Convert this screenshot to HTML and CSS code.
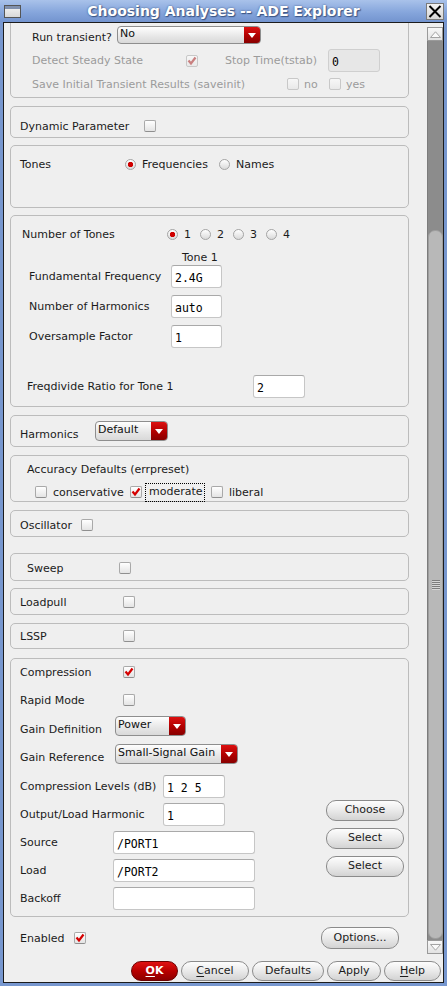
FILE: index.html
```html
<!DOCTYPE html>
<html>
<head>
<meta charset="utf-8">
<title>Choosing Analyses -- ADE Explorer</title>
<link rel="stylesheet" href="styles.css">
</head>
<body>
<div class="window">
  <div class="titlebar">
    <div class="tb-left"><span class="win-icon"><span class="win-icon-bar"></span></span></div>
    <div class="title">Choosing Analyses -- ADE Explorer</div>
    <div class="tb-right">
      <span class="close-btn"><svg width="14" height="13" viewBox="0 0 14 13"><path d="M1.5 1 L12.5 12 M12.5 1 L1.5 12" stroke="#000" stroke-width="2"/></svg></span>
    </div>
  </div>
  <div class="client">
    <div class="main">
      <div class="viewport">
        <div class="scroll-content">

          <section class="group g-transient">
            <div class="row h18 al-end">
              <span class="lbl w85">Run transient?</span>
              <div class="combo h18c w144"><span class="combo-text">No</span><span class="combo-arrow"><svg width="8" height="5" viewBox="0 0 8 5"><path d="M0 0H8L4 5Z" fill="#fff"/></svg></span></div>
            </div>
            <div class="row h23 mt5 dis">
              <span class="lbl w154">Detect Steady State</span>
              <span class="cb checked disabled"><svg width="10" height="10" viewBox="0 0 10 10"><path d="M1.5 4.5 L4 7.5 L8.5 1.5" fill="none" stroke="#c98080" stroke-width="2.2"/></svg></span>
              <span class="lbl ml27 w103">Stop Time(tstab)</span>
              <span class="field field-dis w52">0</span>
            </div>
            <div class="row h18 mt3 dis">
              <span class="lbl w255">Save Initial Transient Results (saveinit)</span>
              <span class="opt w42"><span class="cb disabled"></span><span>no</span></span>
              <span class="opt"><span class="cb disabled"></span><span>yes</span></span>
            </div>
          </section>

          <section class="group g-dyn">
            <div class="row h18">
              <span class="lbl w124">Dynamic Parameter</span>
              <span class="cb"></span>
            </div>
          </section>

          <section class="group g-tones">
            <div class="row h18">
              <span class="lbl w105">Tones</span>
              <span class="ropt w94"><span class="radio on"></span>Frequencies</span>
              <span class="ropt"><span class="radio"></span>Names</span>
            </div>
          </section>

          <section class="group g-hb">
            <div class="row h18 ml11">
              <span class="lbl w145">Number of Tones</span>
              <span class="ropt w33"><span class="radio on"></span>1</span>
              <span class="ropt w33"><span class="radio"></span>2</span>
              <span class="ropt w33"><span class="radio"></span>3</span>
              <span class="ropt"><span class="radio"></span>4</span>
            </div>
            <div class="tone-head">Tone 1</div>
            <div class="row h23 ml18">
              <span class="lbl w142">Fundamental Frequency</span>
              <span class="field w51">2.4G</span>
            </div>
            <div class="row h23 ml18 mt7">
              <span class="lbl w142">Number of Harmonics</span>
              <span class="field w51">auto</span>
            </div>
            <div class="row h23 ml18 mt7">
              <span class="lbl w142">Oversample Factor</span>
              <span class="field w51">1</span>
            </div>
            <div class="row h23 ml16 mt27">
              <span class="lbl w226">Freqdivide Ratio for Tone 1</span>
              <span class="field w52">2</span>
            </div>
          </section>

          <section class="group g-harm">
            <div class="row h20 al-end">
              <span class="lbl w75">Harmonics</span>
              <div class="combo h20c w73"><span class="combo-text">Default</span><span class="combo-arrow"><svg width="8" height="5" viewBox="0 0 8 5"><path d="M0 0H8L4 5Z" fill="#fff"/></svg></span></div>
            </div>
          </section>

          <section class="group g-acc">
            <div class="acc-title">Accuracy Defaults (errpreset)</div>
            <div class="row h18 ml24 mt6 al-start">
              <span class="opt6 w95"><span class="cb"></span>conservative</span>
              <span class="cb checked"><svg width="10" height="10" viewBox="0 0 10 10"><path d="M1.5 4.5 L4 7.5 L8.5 1.5" fill="none" stroke="#d40000" stroke-width="2.2"/></svg></span>
              <span class="focus-lbl">moderate</span>
              <span class="opt6"><span class="cb"></span>liberal</span>
            </div>
          </section>

          <section class="group g-osc">
            <div class="row h18">
              <span class="lbl w61">Oscillator</span>
              <span class="cb"></span>
            </div>
          </section>

          <section class="group g-sweep">
            <div class="row h18">
              <span class="lbl w92">Sweep</span>
              <span class="cb"></span>
            </div>
          </section>

          <section class="group g-lp">
            <div class="row h18">
              <span class="lbl w103">Loadpull</span>
              <span class="cb"></span>
            </div>
          </section>

          <section class="group g-lssp">
            <div class="row h18">
              <span class="lbl w103">LSSP</span>
              <span class="cb"></span>
            </div>
          </section>

          <section class="group g-comp">
            <div class="row h18">
              <span class="lbl w103">Compression</span>
              <span class="cb checked"><svg width="10" height="10" viewBox="0 0 10 10"><path d="M1.5 4.5 L4 7.5 L8.5 1.5" fill="none" stroke="#d40000" stroke-width="2.2"/></svg></span>
            </div>
            <div class="row h18 mt10">
              <span class="lbl w103">Rapid Mode</span>
              <span class="cb"></span>
            </div>
            <div class="row h20 mt7 al-end">
              <span class="lbl w95">Gain Definition</span>
              <div class="combo h20c w71"><span class="combo-text">Power</span><span class="combo-arrow"><svg width="8" height="5" viewBox="0 0 8 5"><path d="M0 0H8L4 5Z" fill="#fff"/></svg></span></div>
            </div>
            <div class="row h20 mt8 al-end">
              <span class="lbl w95">Gain Reference</span>
              <div class="combo h20c w123"><span class="combo-text">Small-Signal Gain</span><span class="combo-arrow"><svg width="8" height="5" viewBox="0 0 8 5"><path d="M0 0H8L4 5Z" fill="#fff"/></svg></span></div>
            </div>
            <div class="row h23 mt11">
              <span class="lbl w143">Compression Levels (dB)</span>
              <span class="field w62">1 2 5</span>
            </div>
            <div class="row h23 mt5">
              <span class="lbl w143">Output/Load Harmonic</span>
              <span class="field w62">1</span>
              <button class="btn side">Choose</button>
            </div>
            <div class="row h23 mt5">
              <span class="lbl w93">Source</span>
              <span class="field w142">/PORT1</span>
              <button class="btn side">Select</button>
            </div>
            <div class="row h23 mt5">
              <span class="lbl w93">Load</span>
              <span class="field w142">/PORT2</span>
              <button class="btn side">Select</button>
            </div>
            <div class="row h23 mt5">
              <span class="lbl w93">Backoff</span>
              <span class="field w142"></span>
            </div>
          </section>

          <div class="enabled-row">
            <span class="lbl w54">Enabled</span>
            <span class="cb checked"><svg width="10" height="10" viewBox="0 0 10 10"><path d="M1.5 4.5 L4 7.5 L8.5 1.5" fill="none" stroke="#d40000" stroke-width="2.2"/></svg></span>
            <button class="btn opts">Options...</button>
          </div>

        </div>
      </div>
      <div class="scrollbar">
        <div class="sb-btn"><svg width="11" height="7" viewBox="0 0 11 7"><path d="M0.5 6.5 L5.5 0.8 L10.5 6.5 Z" fill="#fafafa" stroke="#a4a4a4"/></svg></div>
        <div class="sb-track">
          <div class="sb-thumb"><span class="grip"></span></div>
        </div>
        <div class="sb-btn"><svg width="11" height="7" viewBox="0 0 11 7"><path d="M0.5 0.5 L5.5 6.2 L10.5 0.5 Z" fill="#fafafa" stroke="#a4a4a4"/></svg></div>
      </div>
    </div>
    <div class="dialog-buttons">
      <button class="btn dbtn ok w47"><u>O</u>K</button>
      <button class="btn dbtn w68"><u>C</u>ancel</button>
      <button class="btn dbtn w72">Defaults</button>
      <button class="btn dbtn w54b">Apply</button>
      <button class="btn dbtn w57"><u>H</u>elp</button>
    </div>
  </div>
</div>
</body>
</html>
```

FILE: styles.css
```css
* { box-sizing: border-box; }
html, body { margin: 0; padding: 0; }
body {
  width: 447px;
  height: 986px;
  overflow: hidden;
  font-family: "DejaVu Sans", "Liberation Sans", sans-serif;
  font-size: 11px;
  color: #1b1b1b;
  background: #7797cf;
}
.window {
  width: 447px;
  height: 986px;
  display: flex;
  flex-direction: column;
  background: #7797cf;
}

/* title bar */
.titlebar {
  height: 22px;
  display: grid;
  grid-template-columns: 1fr auto 1fr;
  align-items: center;
  background: linear-gradient(#a9c2ea, #86a6dc 55%, #7394cf);
}
.tb-left { padding-left: 4px; display: flex; align-items: center; }
.tb-right { justify-self: end; padding-right: 3px; display: flex; align-items: center; }
.title {
  color: #fff;
  font-weight: bold;
  font-size: 14px;
  line-height: 22px;
  text-shadow: 1px 1px 1px #3b5584, 0 0 2px #3b5584;
}
.win-icon {
  width: 17px;
  height: 13px;
  border: 1px solid #555;
  background: linear-gradient(#f4f4f4, #d8d8d8);
  display: flex;
  flex-direction: column;
}
.win-icon-bar { height: 3px; background: #8090ad; }
.close-btn {
  width: 18px;
  height: 17px;
  border: 1px solid #7a7a7a;
  background: linear-gradient(#f2f2f2, #d6d6d6);
  display: flex;
  align-items: center;
  justify-content: center;
}

/* client area */
.client {
  flex: 1;
  margin: 0 3px 3px;
  border: 1px solid #1c1c1c;
  background: #efefef;
  display: flex;
  flex-direction: column;
  min-height: 0;
}
.main { flex: 1; display: flex; min-height: 0; }
.viewport { flex: 1; overflow: hidden; }
.scroll-content { margin-top: -10px; padding: 0 18px 0 6px; }

/* scrollbar */
.scrollbar {
  width: 16px;
  display: flex;
  flex-direction: column;
  padding: 4px 0 1px;
}
.sb-btn {
  height: 14px;
  border: 1px solid #9a9a9a;
  background: linear-gradient(#f8f8f8, #e2e2e2);
  display: flex;
  align-items: center;
  justify-content: center;
}
.sb-track {
  flex: 1;
  background: #8c8c8c;
  display: flex;
  flex-direction: column;
  border-left: 1px solid #7c7c7c;
}
.sb-thumb {
  margin-top: 189px;
  height: 709px;
  background: #b8b8b8;
  border: 1px solid #9d9d9d;
  border-radius: 7px;
  display: flex;
  align-items: center;
  justify-content: center;
}
.grip {
  width: 8px;
  height: 10px;
  background: repeating-linear-gradient(#7e7e7e 0 1px, #d8d8d8 1px 2px);
}

/* groups */
.group { border: 1px solid #bcbcbc; border-radius: 5px; }
.g-transient { padding: 12px 0 4px 21px; }
.g-dyn { margin-top: 8px; padding: 10px 0 2px 9px; }
.g-tones { margin-top: 7px; padding: 9px 0 34px 9px; }
.g-hb { margin-top: 7px; padding: 9px 0 8px 0; }
.g-harm { margin-top: 8px; padding: 5px 0 5px 9px; }
.g-acc { margin-top: 8px; padding: 7px 0 0 0; }
.g-osc { margin-top: 8px; padding: 5px 0 2px 9px; }
.g-sweep { margin-top: 16px; padding: 5px 0 3px 16px; }
.g-lp { margin-top: 7px; padding: 4px 0 3px 9px; }
.g-lssp { margin-top: 8px; padding: 3px 0 3px 9px; }
.g-comp { margin-top: 9px; padding: 4px 4px 6px 9px; }

.row { display: flex; align-items: center; }
.al-end { align-items: flex-end; }
.al-start { align-items: flex-start; }
.h18 { height: 18px; }
.h20 { height: 20px; }
.h23 { height: 23px; }
.mt3 { margin-top: 3px; }
.mt5 { margin-top: 5px; }
.mt6 { margin-top: 6px; }
.mt7 { margin-top: 7px; }
.mt8 { margin-top: 8px; }
.mt10 { margin-top: 10px; }
.mt11 { margin-top: 11px; }
.mt27 { margin-top: 27px; }
.ml11 { margin-left: 11px; }
.ml16 { margin-left: 16px; }
.ml18 { margin-left: 18px; }
.ml24 { margin-left: 24px; }
.ml27 { margin-left: 27px; }

.lbl { flex: none; line-height: 13px; white-space: nowrap; }
.w33 { width: 33px; }
.w42 { width: 42px; }
.w51 { width: 51px; }
.w52 { width: 52px; }
.w54 { width: 54px; }
.w61 { width: 61px; }
.w62 { width: 62px; }
.w71 { width: 71px; }
.w73 { width: 73px; }
.w75 { width: 75px; }
.w85 { width: 85px; }
.w92 { width: 92px; }
.w93 { width: 93px; }
.w94 { width: 94px; }
.w95 { width: 95px; }
.w103 { width: 103px; }
.w105 { width: 105px; }
.w123 { width: 123px; }
.w124 { width: 124px; }
.w142 { width: 142px; }
.w143 { width: 143px; }
.w144 { width: 144px; }
.w145 { width: 145px; }
.w154 { width: 154px; }
.w226 { width: 226px; }
.w255 { width: 255px; }

.dis { color: #9b9b9b; }

.tone-head { margin: 8px 0 0 171px; height: 14px; line-height: 14px; }
.acc-title { margin-left: 16px; height: 14px; line-height: 14px; }

/* checkbox */
.cb {
  flex: none;
  width: 12px;
  height: 12px;
  border: 1px solid #a9a9a9;
  border-bottom-color: #8f8f8f;
  border-radius: 2px;
  background: linear-gradient(#ffffff, #e4e4e4);
  display: flex;
  align-items: center;
  justify-content: center;
}
.cb.disabled { border-color: #c8c8c8; background: linear-gradient(#f7f7f7, #e9e9e9); }
.opt { display: flex; align-items: center; gap: 5px; flex: none; }
.opt6 { display: flex; align-items: center; gap: 6px; flex: none; }
.focus-lbl {
  margin: 0 6px 0 3px;
  width: 60px;
  height: 19px;
  padding-left: 3px;
  border: 1px dotted #000;
  line-height: 16px;
  flex: none;
}
.row.al-start > .cb, .row.al-start > .opt6 { align-self: center; }

/* radio */
.ropt { display: flex; align-items: center; gap: 6px; flex: none; }
.radio {
  flex: none;
  width: 11px;
  height: 11px;
  border: 1px solid #a4a4a4;
  border-radius: 50%;
  background: linear-gradient(#ffffff, #dadada);
}
.radio.on {
  background: radial-gradient(circle at 50% 50%, #cf0000 0 2.4px, rgba(207,0,0,0) 3px), linear-gradient(#ffffff, #dadada);
}

/* combo */
.combo {
  flex: none;
  display: flex;
  border: 1px solid #8e8e8e;
  border-radius: 4px;
  overflow: hidden;
  background: linear-gradient(#fefefe, #e6e6e6 60%, #d9d9d9);
}
.h18c { height: 18px; }
.h20c { height: 20px; }
.combo-text { flex: 1; padding-left: 2px; line-height: 14px; white-space: nowrap; color: #111; }
.h20c .combo-text { line-height: 16px; }
.combo-arrow {
  width: 16px;
  background: linear-gradient(#dc1010, #b00000 55%, #880000);
  display: flex;
  align-items: center;
  justify-content: center;
}

/* text fields */
.field {
  flex: none;
  height: 23px;
  border: 1px solid #c6c6c6;
  border-top-color: #a9a9a9;
  border-radius: 3px;
  background: #fff;
  padding: 2px 0 0 3px;
  font-family: "DejaVu Sans Mono", "Liberation Mono", monospace;
  font-size: 11.5px;
  color: #000;
  display: flex;
  align-items: center;
  white-space: pre;
}
.field-dis { background: #e7e7e7; border-color: #cfcfcf; }

/* buttons */
.btn {
  font-family: "DejaVu Sans", "Liberation Sans", sans-serif;
  font-size: 11px;
  color: #1b1b1b;
  height: 21px;
  padding: 0 0 2px;
  border: 1px solid #8b8b8b;
  border-radius: 10px;
  background: linear-gradient(#fdfdfd, #ececec 45%, #d3d3d3);
  flex: none;
}
.btn.side { margin-left: auto; width: 78px; align-self: flex-start; margin-top: -3px; }
.enabled-row {
  display: flex;
  align-items: center;
  height: 22px;
  margin-top: 10px;
  padding: 0 10px;
}
.btn.opts { margin-left: auto; width: 78px; height: 22px; }

.dialog-buttons {
  height: 27px;
  display: flex;
  justify-content: flex-end;
  gap: 3px;
  padding: 6px 2px 1px 0;
}
.dbtn { height: 20px; padding: 0 0 1px; }
.dbtn u { text-decoration: underline; text-underline-offset: 2px; }
.w47 { width: 47px; }
.w68 { width: 68px; }
.w72 { width: 72px; }
.w54b { width: 54px; }
.w57 { width: 57px; }
.btn.ok {
  background: linear-gradient(#e01212, #b80000 50%, #8c0000);
  border-color: #6a0000;
  color: #fff;
  font-weight: bold;
}
```
